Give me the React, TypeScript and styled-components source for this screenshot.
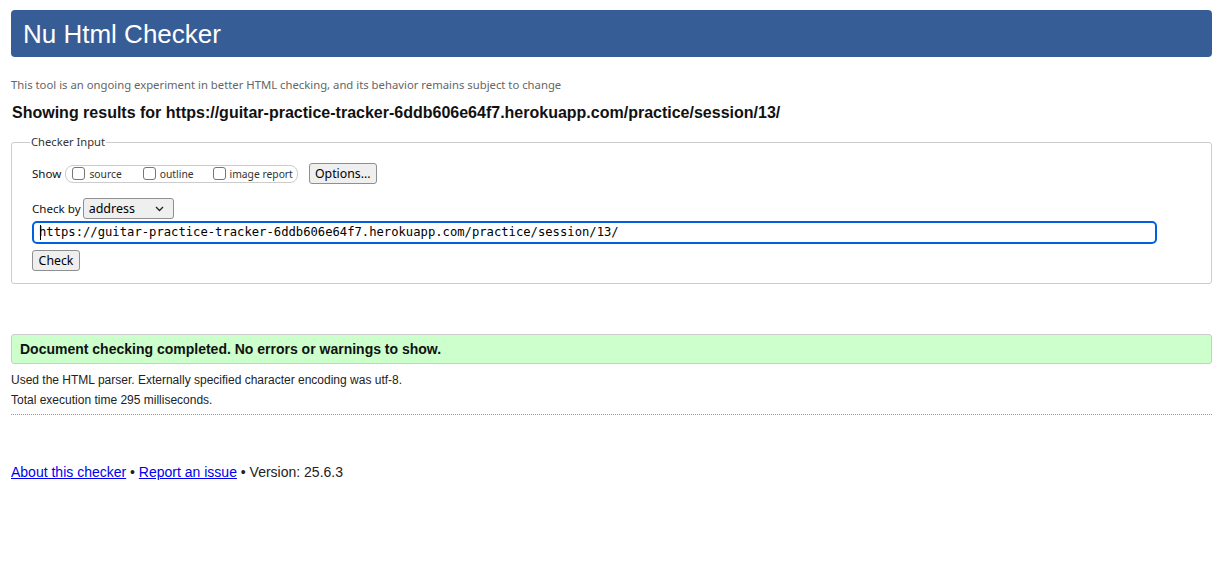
import React from "react";
import styled, { createGlobalStyle } from "styled-components";

const Global = createGlobalStyle`
  html, body { margin: 0; padding: 0; background: #fff; }
  body { font-family: "Liberation Sans", Arial, sans-serif; color: #000; }
`;

const Page = styled.div`
  width: 1201px;
  padding: 10px 0 0 11px;
`;

const Header = styled.h1`
  margin: 0;
  height: 47px;
  box-sizing: border-box;
  background: #365d95;
  border-radius: 4px;
  color: #fff;
  font-family: "Liberation Sans", Arial, sans-serif;
  font-weight: normal;
  font-size: 26px;
  line-height: 47px;
  padding: 1px 0 0 12px;
`;

const Intro = styled.p`
  margin: 20px 0 0 0;
  font-family: "Noto Sans", "Open Sans", sans-serif;
  font-size: 11.3px;
  line-height: 16px;
  color: #666;
`;

const Results = styled.h2`
  margin: 10px 0 0 1px;
  font-size: 16px;
  line-height: 20px;
  font-weight: bold;
  color: #111;
`;

const Fieldset = styled.fieldset`
  margin: 12px 0 0 0;
  padding: 0 20px 12px 20px;
  border: 1px solid #ccc;
  border-radius: 3px;
  min-inline-size: 0;
`;

const Legend = styled.legend`
  padding: 0 1px;
  margin-left: -2px;
  font-family: "Noto Sans", "Open Sans", sans-serif;
  font-size: 11.2px;
  line-height: 14px;
  color: #333;
`;

const Row = styled.div<{ $top: number }>`
  display: flex;
  align-items: center;
  gap: 4px;
  margin-top: ${(p) => p.$top}px;
  font-family: "Noto Sans", "Open Sans", sans-serif;
  font-size: 12px;
  color: #222;
`;

const Label = styled.span`
  font-size: 11.6px;
  color: #111;
`;

const Pill = styled.span`
  display: inline-flex;
  align-items: center;
  height: 18px;
  box-sizing: border-box;
  border: 1px solid #ccc;
  border-radius: 8px;
  padding: 0 4px 0 6px;
`;

const Check = styled.label<{ $mr: number }>`
  display: inline-flex;
  align-items: center;
  gap: 4px;
  font-size: 10.3px;
  color: #333;
  margin-right: ${(p) => p.$mr}px;
`;

const Box = styled.span`
  display: inline-block;
  width: 13px;
  height: 13px;
  box-sizing: border-box;
  border: 1px solid #767676;
  border-radius: 3px;
  background: #fff;
`;

const Button = styled.button<{ $ml?: number; $w: number }>`
  font-family: "Noto Sans", "Open Sans", sans-serif;
  font-size: 12.3px;
  color: #000;
  width: ${(p) => p.$w}px;
  height: 21px;
  padding: 0;
  box-sizing: border-box;
  border: 1px solid #8f8f8f;
  border-radius: 3px;
  background: #efefef;
  line-height: 19px;
  margin-left: ${(p) => p.$ml ?? 0}px;
`;

const Select = styled.span`
  display: inline-flex;
  align-items: center;
  justify-content: space-between;
  width: 91px;
  height: 21px;
  box-sizing: border-box;
  border: 1px solid #8f8f8f;
  border-radius: 3px;
  background: #efefef;
  padding: 0 9px 0 5px;
  font-size: 12.5px;
  color: #000;
  margin-left: -2px;
  flex-shrink: 0;
`;

const Input = styled.div`
  margin-top: 2px;
  width: 1125px;
  height: 23px;
  box-sizing: border-box;
  border: 2px solid #0060df;
  border-radius: 5px;
  font-family: "DejaVu Sans Mono", "Liberation Mono", monospace;
  font-size: 12.2px;
  line-height: 19px;
  padding-left: 5px;
  color: #000;
  position: relative;
`;

const Caret = styled.span`
  position: absolute;
  left: 6px;
  top: 2px;
  width: 1px;
  height: 15px;
  background: #000;
`;

const Success = styled.div`
  margin-top: 50px;
  height: 30px;
  box-sizing: border-box;
  background: #ccffcc;
  border: 1px solid #ccc;
  border-radius: 3px;
  padding-left: 8px;
  font-size: 14px;
  font-weight: bold;
  line-height: 28px;
  color: #111;
`;

const Detail = styled.p<{ $top: number }>`
  margin: ${(p) => p.$top}px 0 0 0;
  font-size: 12px;
  line-height: 16px;
  color: #222;
`;

const Rule = styled.hr`
  margin: 6px 0 0 0;
  border: 0;
  border-top: 1px dotted #999;
  height: 0;
`;

const Footer = styled.p`
  margin: 48px 0 0 0;
  font-size: 14px;
  line-height: 18px;
  color: #222;
  a { color: #00e; text-decoration: underline; }
`;

export default function App() {
  const url = "https://guitar-practice-tracker-6ddb606e64f7.herokuapp.com/practice/session/13/";
  return (
    <>
      <Global />
      <Page>
        <Header>Nu Html Checker</Header>
        <Intro>This tool is an ongoing experiment in better HTML checking, and its behavior remains subject to change</Intro>
        <Results>Showing results for {url}</Results>
        <Fieldset>
          <Legend>Checker Input</Legend>
          <Row $top={14}>
            <Label>Show</Label>
            <Pill>
              <Check $mr={21}><Box />source</Check>
              <Check $mr={19}><Box />outline</Check>
              <Check $mr={0}><Box />image report</Check>
            </Pill>
            <Button $ml={7} $w={68}>Options...</Button>
          </Row>
          <Row $top={14}>
            <Label>Check by</Label>
            <Select>
              address
              <svg width="9" height="6" viewBox="0 0 9 6"><path d="M1 1l3.5 3.5L8 1" fill="none" stroke="#222" strokeWidth="1.3" /></svg>
            </Select>
          </Row>
          <Input><Caret />{url}</Input>
          <Row $top={6}>
            <Button $w={48}>Check</Button>
          </Row>
        </Fieldset>
        <Success>Document checking completed. No errors or warnings to show.</Success>
        <Detail $top={8}>Used the HTML parser. Externally specified character encoding was utf-8.</Detail>
        <Detail $top={4}>Total execution time 295 milliseconds.</Detail>
        <Rule />
        <Footer>
          <a href="#">About this checker</a> • <a href="#">Report an issue</a> • Version: 25.6.3
        </Footer>
      </Page>
    </>
  );
}
